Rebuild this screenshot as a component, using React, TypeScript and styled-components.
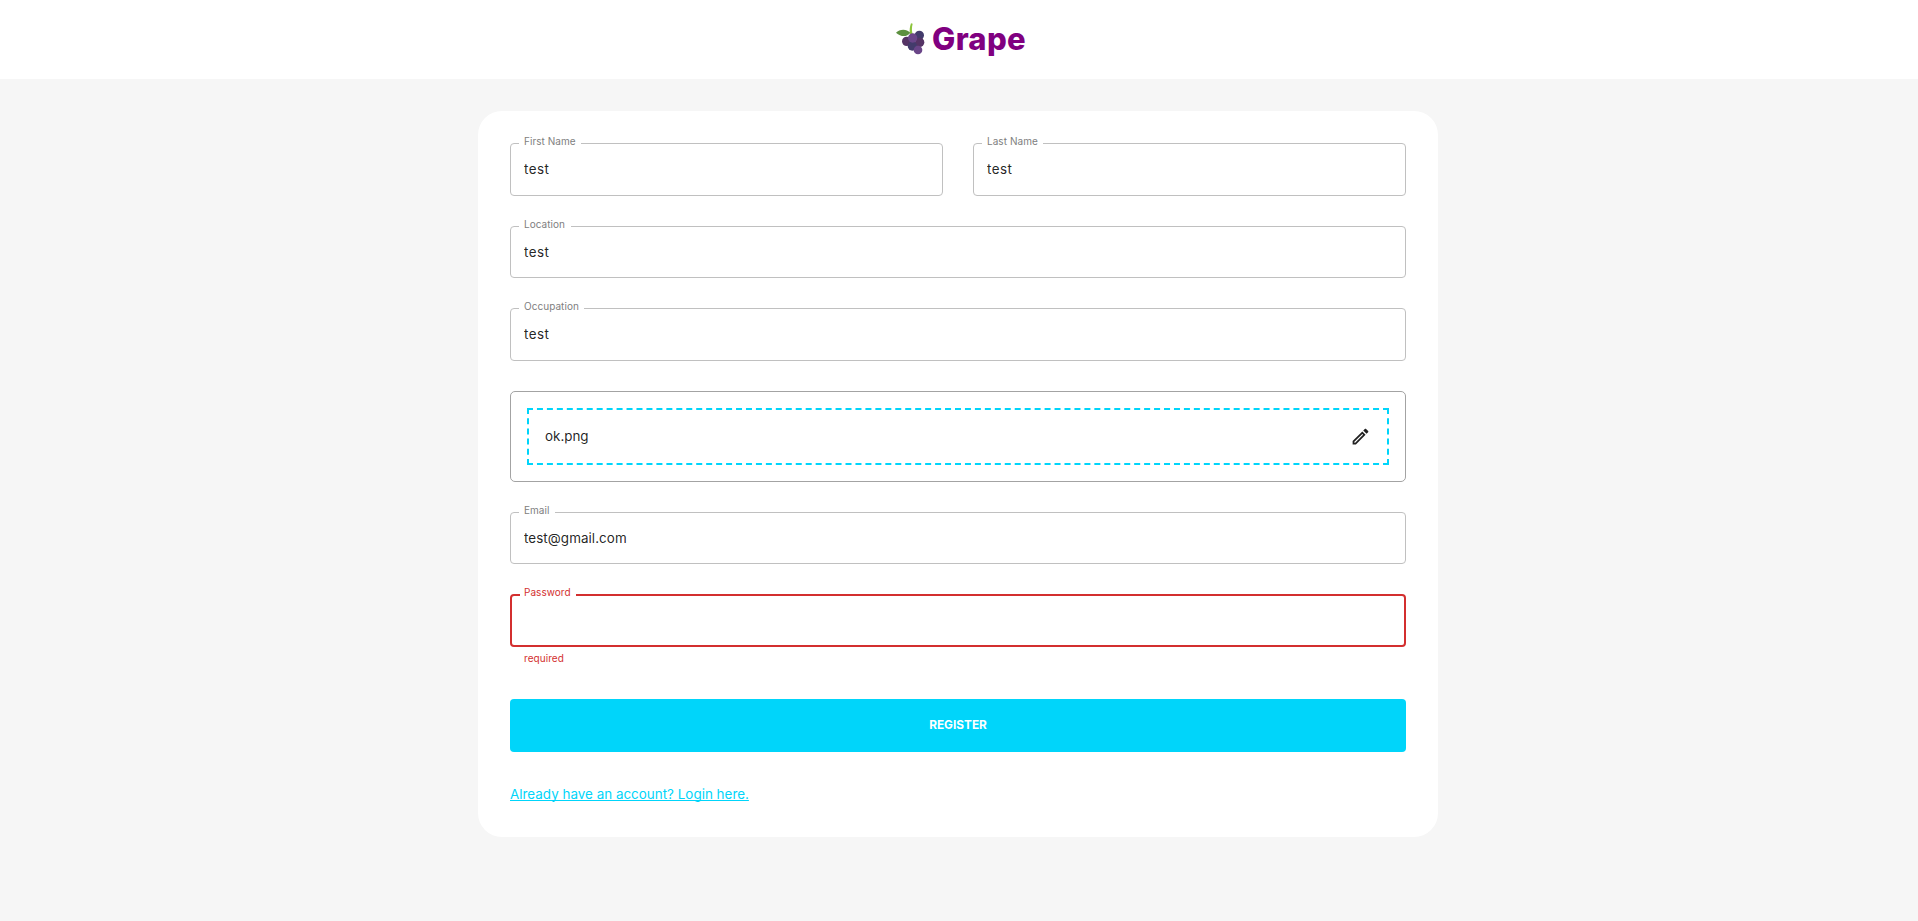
import React from "react";
import styled, { createGlobalStyle } from "styled-components";

const GlobalStyle = createGlobalStyle`
  *, *::before, *::after { box-sizing: border-box; }
  body {
    margin: 0;
    background: #f6f6f6;
    color: rgba(0, 0, 0, 0.87);
    font-family: Inter, "Liberation Sans", sans-serif;
    font-size: 13.4px;
  }
`;

const Page = styled.div`
  min-height: 921px;
  background: #f6f6f6;
`;

const Header = styled.header`
  display: flex;
  justify-content: center;
  align-items: center;
  height: 79px;
  padding: 0 0 2px 6px;
  background: #fff;
`;

const Brand = styled.div`
  display: flex;
  align-items: center;
  gap: 7px;
  width: 134px;
  height: 34px;
`;

const BrandName = styled.h1`
  margin: 0;
  color: #800080;
  font-size: 31px;
  line-height: 34px;
  font-weight: 800;
  letter-spacing: 0.3px;
`;

const Card = styled.main`
  display: flex;
  flex-direction: column;
  width: 960px;
  height: 726px;
  margin: 32px 0 0 478px;
  padding: 32px;
  border-radius: 24px;
  background: #fff;
`;

const Form = styled.form`
  display: flex;
  flex-direction: column;
  gap: 30px;
`;

const NameRow = styled.div`
  display: grid;
  grid-template-columns: 1fr 1fr;
  gap: 30px;
`;

const FieldBox = styled.div<{ $height: number; $error?: boolean }>`
  position: relative;
  height: ${(p) => p.$height}px;
  border: ${(p) => (p.$error ? "2px solid #d32f2f" : "1px solid #c0c0c0")};
  border-radius: 4px;
`;

const FieldLabel = styled.label<{ $width: number; $error?: boolean }>`
  position: absolute;
  top: ${(p) => (p.$error ? -11 : -10)}px;
  left: 8px;
  width: ${(p) => p.$width}px;
  padding-left: ${(p) => (p.$error ? 4 : 5)}px;
  background: #fff;
  color: ${(p) => (p.$error ? "#d32f2f" : "#808080")};
  font-size: 10px;
  line-height: 14px;
  letter-spacing: 0.05px;
  white-space: nowrap;
`;

const FieldInput = styled.input<{ $spacing: number }>`
  display: block;
  width: 100%;
  height: 100%;
  padding: 0 13px 1px;
  border: 0;
  outline: 0;
  background: transparent;
  color: rgba(0, 0, 0, 0.87);
  font: inherit;
  letter-spacing: ${(p) => p.$spacing}px;
`;

const HelperText = styled.p`
  margin: 3px 14px 0;
  height: 19px;
  color: #d32f2f;
  font-size: 10px;
  line-height: 16px;
  letter-spacing: 0.05px;
`;

const UploadBox = styled.div`
  height: 91px;
  padding: 16px;
  border: 1px solid #a3a3a3;
  border-radius: 5px;
`;

const DropZone = styled.div`
  display: flex;
  justify-content: space-between;
  align-items: center;
  height: 57px;
  padding: 0 16px;
  border: 2px dashed #00d5fa;
`;

const FileName = styled.span`
  padding-bottom: 1px;
`;

const SubmitButton = styled.button`
  height: 53px;
  padding-bottom: 3px;
  border: 0;
  border-radius: 4px;
  background: #00d5fa;
  color: #fff;
  font-family: inherit;
  font-size: 11.8px;
  font-weight: 700;
`;

const LoginLink = styled.a`
  align-self: flex-start;
  margin-top: 3px;
  color: #00d5fa;
  line-height: 18px;
  letter-spacing: 0.02px;
  text-decoration: underline;
  text-decoration-skip-ink: none;
`;

type FieldProps = {
  id: string;
  label: string;
  value: string;
  notch: number;
  height?: number;
  spacing?: number;
  error?: string;
};

function Field({ id, label, value, notch, height = 53, spacing = 0.5, error }: FieldProps) {
  return (
    <div>
      <FieldBox $height={height} $error={!!error}>
        <FieldLabel htmlFor={id} $width={notch} $error={!!error}>
          {label}
        </FieldLabel>
        <FieldInput id={id} defaultValue={value} $spacing={spacing} />
      </FieldBox>
      {error && <HelperText>{error}</HelperText>}
    </div>
  );
}

function GrapeLogo() {
  return (
    <svg width="30" height="34" viewBox="45 36 90 102" aria-hidden="true">
      <path d="M90 73C88 62 89 51 93 40L98 41C95 53 95 62 98 73Z" fill="#8cc43c" />
      <path d="M48 68C58 57 79 55 91 68C81 81 64 82 48 68Z" fill="#5c903f" />
      <circle cx="118" cy="76" r="14" fill="#433b6b" />
      <circle cx="80" cy="94" r="14" fill="#553465" />
      <circle cx="119" cy="97" r="14" fill="#553465" />
      <circle cx="97" cy="108" r="14" fill="#433b6b" />
      <circle cx="98" cy="84" r="14" fill="#6a4588" />
      <circle cx="114" cy="120" r="13" fill="#6a4588" />
    </svg>
  );
}

function EditIcon() {
  return (
    <svg width="21" height="21" viewBox="0 0 24 24" fill="rgba(0,0,0,0.87)" aria-hidden="true">
      <path d="m14.06 9.02.92.92L5.92 19H5v-.92zM17.66 3c-.25 0-.51.1-.7.29l-1.83 1.83 3.75 3.75 1.83-1.83c.39-.39.39-1.02 0-1.41l-2.34-2.34c-.2-.2-.45-.29-.71-.29m-3.6 3.19L3 17.25V21h3.75L17.81 9.94z" />
    </svg>
  );
}

export default function App() {
  return (
    <Page>
      <GlobalStyle />
      <Header>
        <Brand>
          <GrapeLogo />
          <BrandName>Grape</BrandName>
        </Brand>
      </Header>
      <Card>
        <Form>
          <NameRow>
            <Field id="first" label="First Name" value="test" notch={62} />
            <Field id="last" label="Last Name" value="test" notch={61} />
          </NameRow>
          <Field id="location" label="Location" value="test" notch={52} height={52} />
          <Field id="occupation" label="Occupation" value="test" notch={65} />
          <UploadBox>
            <DropZone>
              <FileName>ok.png</FileName>
              <EditIcon />
            </DropZone>
          </UploadBox>
          <Field id="email" label="Email" value="test@gmail.com" notch={36} height={52} spacing={0.08} />
          <Field id="password" label="Password" value="" notch={56} error="required" />
          <SubmitButton type="button">REGISTER</SubmitButton>
          <LoginLink>Already have an account? Login here.</LoginLink>
        </Form>
      </Card>
    </Page>
  );
}
